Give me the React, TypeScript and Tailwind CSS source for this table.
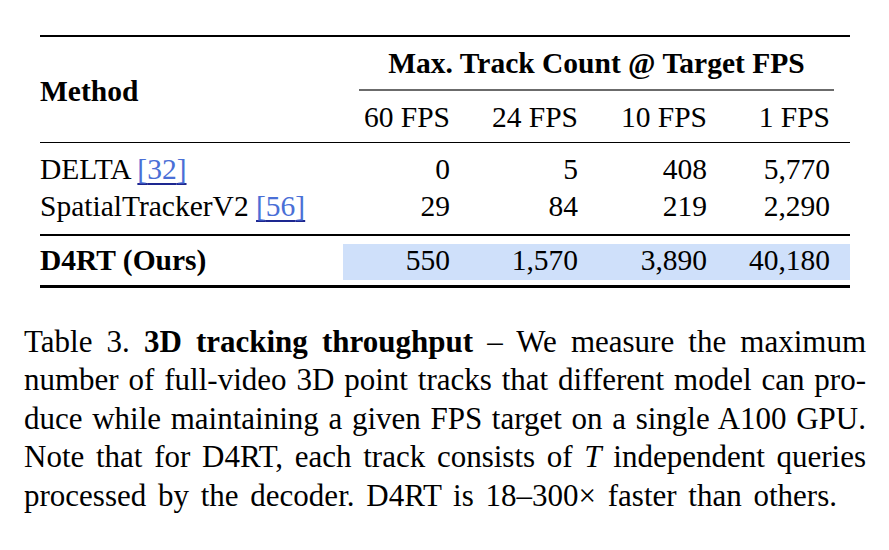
const rows = [
  { name: "DELTA", cite: "32", vals: ["0", "5", "408", "5,770"] },
  { name: "SpatialTrackerV2", cite: "56", vals: ["29", "84", "219", "2,290"] },
];

const fps = ["60 FPS", "24 FPS", "10 FPS", "1 FPS"];
const ours = ["550", "1,570", "3,890", "40,180"];

const cols = "grid grid-cols-[303px_127px_128px_129px_123px]";

export default function App() {
  return (
    <div className="h-[550px] w-[889px] overflow-hidden bg-white font-['Liberation_Serif','Times_New_Roman',serif] text-black">
      <div className="ml-[40px] w-[810px] pt-[35px] text-[29.5px]">
        <div className="h-[2px] bg-black" />

        {/* header */}
        <div className="flex">
          <div className="flex w-[303px] items-center pt-1 font-bold leading-[36px]">Method</div>
          <div className="w-[507px] pt-[8px] pb-[7px]">
            <div className="text-center font-bold leading-[36px]">Max. Track Count @ Target FPS</div>
            <div className="mx-[16px] mt-[8px] h-[1.5px] bg-[#6b6b6b]" />
            <div className="mt-[8px] grid grid-cols-[127px_128px_129px_123px] leading-[36px]">
              {fps.map((f) => (
                <div key={f} className="pr-5 text-right">
                  {f}
                </div>
              ))}
            </div>
          </div>
        </div>
        <div className="h-[1.5px] bg-black" />

        {/* body */}
        <div className="pt-[8px] pb-[10px] leading-[36.5px]">
          {rows.map((r) => (
            <div key={r.name} className={cols}>
              <div>
                {r.name}{" "}
                <span className="text-[#4a6fd6] underline decoration-[#1d2790] decoration-[1.5px] underline-offset-[4px]">
                  [{r.cite}]
                </span>
              </div>
              {r.vals.map((v, i) => (
                <div key={i} className="pr-5 text-right">
                  {v}
                </div>
              ))}
            </div>
          ))}
        </div>
        <div className="h-[1.5px] bg-black" />

        {/* ours */}
        <div className={`${cols} pt-[8px] pb-[5.5px] leading-[33px]`}>
          <div className="h-[36px] font-bold">D4RT (Ours)</div>
          {ours.map((v, i) => (
            <div key={i} className="h-[36px] bg-[#cfe0fa] pr-5 text-right">
              {v}
            </div>
          ))}
        </div>
        <div className="h-[2.5px] bg-black" />
      </div>

      {/* caption */}
      <div className="ml-[24px] mt-[35px] w-[842px] text-justify text-[31px] leading-[38.5px]">
        <div className="[text-align-last:justify]">
          Table 3. <b>3D tracking throughput</b> – We measure the maximum
        </div>
        <div className="[text-align-last:justify]">
          number of full-video 3D point tracks that different model can pro-
        </div>
        <div className="[text-align-last:justify]">
          duce while maintaining a given FPS target on a single A100 GPU.
        </div>
        <div className="[text-align-last:justify]">
          Note that for D4RT, each track consists of <i>T</i> independent queries
        </div>
        <div className="[word-spacing:4px]">processed by the decoder. D4RT is 18–300× faster than others.</div>
      </div>
    </div>
  );
}
